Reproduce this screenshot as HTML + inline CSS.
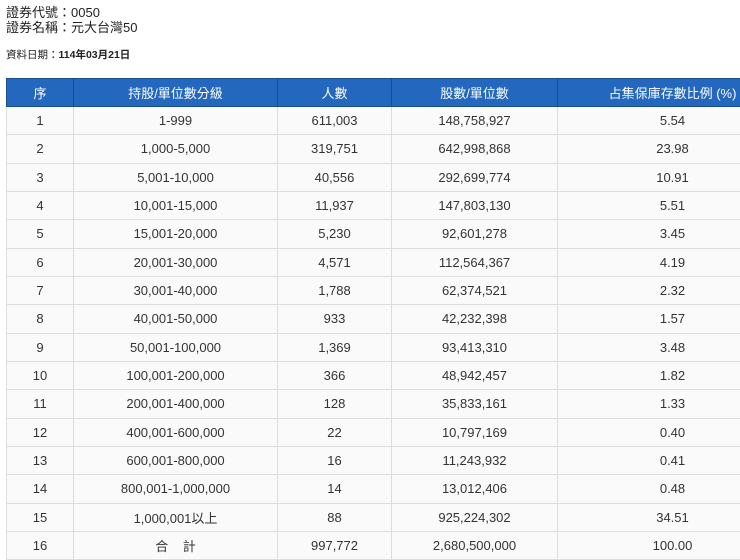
<!DOCTYPE html>
<html><head><meta charset="utf-8"><style>
body{margin:0;background:#fff;font-family:"Liberation Sans","Noto Sans CJK TC",sans-serif;color:#333;width:740px;height:554px;overflow:hidden;position:relative}
.h{position:absolute;left:6px;top:5px;font-size:13px;line-height:15px;color:#222}
.d{position:absolute;left:6px;top:47px;font-size:10.5px;color:#222}
table{position:absolute;left:6px;top:78px;border-collapse:collapse;table-layout:fixed;width:781px}
th{background:#2367bf;color:#fff;font-weight:normal;font-size:13px;height:27px;border:1px solid #1a4d8c;padding:0}
td{background:#fafafa;border:1px solid #ddd;height:27.33px;padding:0;text-align:center;font-size:13px;color:#333}
</style></head><body>
<div class="h">證券代號：0050<br>證券名稱：元大台灣50</div>
<div class="d">資料日期：<b>114年03月21日</b></div>
<table>
<colgroup><col style="width:67px"><col style="width:204px"><col style="width:114px"><col style="width:166px"><col style="width:230px"></colgroup>
<tr><th>序</th><th>持股/單位數分級</th><th>人數</th><th>股數/單位數</th><th>占集保庫存數比例 (%)</th></tr>
<tr><td>1</td><td>1-999</td><td>611,003</td><td>148,758,927</td><td>5.54</td></tr>
<tr><td>2</td><td>1,000-5,000</td><td>319,751</td><td>642,998,868</td><td>23.98</td></tr>
<tr><td>3</td><td>5,001-10,000</td><td>40,556</td><td>292,699,774</td><td>10.91</td></tr>
<tr><td>4</td><td>10,001-15,000</td><td>11,937</td><td>147,803,130</td><td>5.51</td></tr>
<tr><td>5</td><td>15,001-20,000</td><td>5,230</td><td>92,601,278</td><td>3.45</td></tr>
<tr><td>6</td><td>20,001-30,000</td><td>4,571</td><td>112,564,367</td><td>4.19</td></tr>
<tr><td>7</td><td>30,001-40,000</td><td>1,788</td><td>62,374,521</td><td>2.32</td></tr>
<tr><td>8</td><td>40,001-50,000</td><td>933</td><td>42,232,398</td><td>1.57</td></tr>
<tr><td>9</td><td>50,001-100,000</td><td>1,369</td><td>93,413,310</td><td>3.48</td></tr>
<tr><td>10</td><td>100,001-200,000</td><td>366</td><td>48,942,457</td><td>1.82</td></tr>
<tr><td>11</td><td>200,001-400,000</td><td>128</td><td>35,833,161</td><td>1.33</td></tr>
<tr><td>12</td><td>400,001-600,000</td><td>22</td><td>10,797,169</td><td>0.40</td></tr>
<tr><td>13</td><td>600,001-800,000</td><td>16</td><td>11,243,932</td><td>0.41</td></tr>
<tr><td>14</td><td>800,001-1,000,000</td><td>14</td><td>13,012,406</td><td>0.48</td></tr>
<tr><td>15</td><td>1,000,001以上</td><td>88</td><td>925,224,302</td><td>34.51</td></tr>
<tr><td>16</td><td>合&nbsp;&nbsp;&nbsp;&nbsp;計</td><td>997,772</td><td>2,680,500,000</td><td>100.00</td></tr>
</table>
</body></html>
